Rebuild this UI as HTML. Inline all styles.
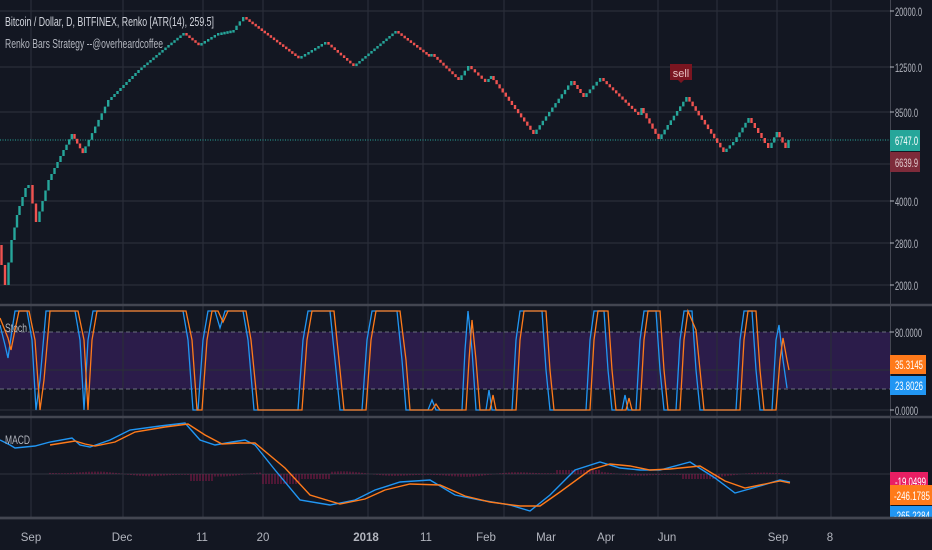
<!DOCTYPE html>
<html><head><meta charset="utf-8"><style>
html,body{margin:0;padding:0;background:#131722;}
body{width:932px;height:550px;overflow:hidden;position:relative;font-family:"Liberation Sans",sans-serif;}
svg{position:absolute;left:0;top:0}
text{font-family:"Liberation Sans",sans-serif;}
</style></head><body>
<svg id="s" width="932" height="550" viewBox="0 0 932 550">
<rect width="932" height="550" fill="#131722"/>
<rect x="0" y="332" width="890" height="57" fill="#2b1c4a"/>
<g stroke="#2a2e39" stroke-width="1.2" fill="none">
<path d="M0 11H890M0 67H890M0 112H890M0 164H890M0 201H890M0 243H890M0 285H890"/>
<path d="M0 370H890M0 410H890M0 474H890"/>
<path d="M31 0V518M123 0V518M203 0V518M263 0V518M368 0V518M423 0V518M504 0V518M592 0V518M658 0V518M717 0V518M777 0V518M831 0V518"/>
</g>
<g stroke="#6b6f7d" stroke-width="1" stroke-dasharray="4 3">
<path d="M0 332H890M0 389H890"/>
</g>
<g stroke="#434651" stroke-width="2.5">
<path d="M0 305H932M0 417H932M0 518H932"/>
</g>
<path d="M890.5 0V518" stroke="#434651" stroke-width="1"/>
<path d="M0 140H890" stroke="#26a69a" stroke-width="1" stroke-dasharray="1 1.5"/>
<g id="renko"></g>
<polyline fill="none" stroke="#2196f3" stroke-width="1.3" points="0,325 5,345 8,358 12,330 15,311 27,311 32,340 36,410 40,380 46,311 75,311 80,340 84,410 88,340 93,311 183,311 188,340 193,410 198,410 203,340 208,311 215,311 220,328 225,311 243,311 248,340 254,410 298,410 303,340 308,311 330,311 336,370 340,410 362,410 367,340 372,311 397,311 402,360 406,410 428,410 432,400 436,410 462,410 465,350 468,311 472,350 476,410 486,410 489,390 492,410 512,410 516,340 520,311 542,311 546,370 550,410 586,410 590,340 594,311 604,311 608,370 612,410 622,410 625,395 628,410 636,410 640,340 644,311 656,311 660,370 664,410 676,410 680,340 684,311 692,311 696,370 700,410 736,410 740,340 744,311 752,311 756,370 760,410 772,410 776,340 779,325 783,360 787,388"/>
<polyline fill="none" stroke="#ff7a1a" stroke-width="1.3" points="0,318 8,338 11,350 15,330 19,311 29,311 35,340 40,410 44,380 50,311 78,311 84,340 88,410 92,340 97,311 186,311 192,340 197,410 202,410 207,340 212,311 218,311 223,322 228,311 246,311 251,340 258,410 302,410 307,340 312,311 334,311 340,370 344,410 366,410 371,340 376,311 400,311 406,360 410,410 432,410 436,404 440,410 466,410 469,360 472,320 476,360 480,410 490,410 493,395 496,410 516,410 520,340 524,311 546,311 550,370 554,410 590,410 594,340 598,311 608,311 612,370 616,410 626,410 629,398 632,410 640,410 644,340 648,311 660,311 664,370 668,410 680,410 684,340 688,311 696,330 700,370 704,410 740,410 744,340 748,311 756,311 760,370 764,410 776,410 780,360 783,338 787,360 789,370"/>
<g id="hist" stroke="#c2185b" stroke-width="0.8" opacity="0.85"></g>
<polyline fill="none" stroke="#2196f3" stroke-width="1.4" points="0,440 10,445 15,448 35,446 50,442 72,438 80,445 90,447 110,440 130,430 160,426 185,423 200,440 215,445 232,442 245,440 255,445 275,470 300,500 330,505 355,500 375,490 400,482 430,480 455,495 480,500 510,505 530,511 550,495 575,470 600,462 620,468 640,470 660,470 690,462 715,478 735,493 760,486 780,480 790,482"/>
<polyline fill="none" stroke="#ff7a1a" stroke-width="1.4" points="50,445 75,441 85,444 95,446 115,442 135,432 165,427 188,424 205,435 222,444 240,443 255,443 285,468 310,495 340,504 365,499 385,490 410,484 440,485 465,496 490,502 520,506 540,506 560,492 590,470 610,464 630,466 650,470 670,469 700,466 725,481 745,488 765,484 780,481 790,483"/>
<path d="M670 64h22v16h-8l-3 3-3-3h-8z" fill="#7a1520"/>
<text x="681" y="77" fill="#e8c0c0" font-size="11" text-anchor="middle">sell</text>
<text x="5" y="26" fill="#d1d4dc" font-size="12.5" textLength="209" lengthAdjust="spacingAndGlyphs">Bitcoin / Dollar, D, BITFINEX, Renko [ATR(14), 259.5]</text>
<text x="5" y="48" fill="#b2b5be" font-size="12.5" textLength="158" lengthAdjust="spacingAndGlyphs">Renko Bars Strategy --@overheardcoffee</text>
<text x="5" y="332" fill="#b2b5be" font-size="12" textLength="22" lengthAdjust="spacingAndGlyphs">Stoch</text>
<text x="5" y="444" fill="#b2b5be" font-size="12" textLength="25" lengthAdjust="spacingAndGlyphs">MACD</text>
<g fill="#b2b5be" font-size="12">
<path d="M890 11h4M890 67h4M890 112h4M890 201h4M890 243h4M890 285h4M890 332h4M890 410h4" stroke="#b2b5be"/>
<text x="895" y="16" textLength="27" lengthAdjust="spacingAndGlyphs">20000.0</text>
<text x="895" y="72" textLength="27" lengthAdjust="spacingAndGlyphs">12500.0</text>
<text x="895" y="117" textLength="23" lengthAdjust="spacingAndGlyphs">8500.0</text>
<text x="895" y="206" textLength="23" lengthAdjust="spacingAndGlyphs">4000.0</text>
<text x="895" y="248" textLength="23" lengthAdjust="spacingAndGlyphs">2800.0</text>
<text x="895" y="290" textLength="23" lengthAdjust="spacingAndGlyphs">2000.0</text>
<text x="895" y="337" textLength="27" lengthAdjust="spacingAndGlyphs">80.0000</text>
<text x="895" y="415" textLength="23" lengthAdjust="spacingAndGlyphs">0.0000</text>
</g>
<rect x="890" y="130" width="30" height="21" fill="#26a69a"/>
<text x="895" y="145" fill="#fff" font-size="12" textLength="23" lengthAdjust="spacingAndGlyphs">6747.0</text>
<rect x="890" y="152" width="30" height="20" fill="#7d2b3a"/>
<text x="895" y="167" fill="#e0c8cc" font-size="12" textLength="23" lengthAdjust="spacingAndGlyphs">6639.9</text>
<rect x="890" y="355" width="36" height="19" fill="#ff7a1a"/>
<text x="895" y="369" fill="#fff" font-size="12" textLength="28" lengthAdjust="spacingAndGlyphs">35.3145</text>
<rect x="890" y="376" width="36" height="19" fill="#2196f3"/>
<text x="895" y="390" fill="#fff" font-size="12" textLength="28" lengthAdjust="spacingAndGlyphs">23.8026</text>
<rect x="890" y="472" width="38" height="19" fill="#e91e63"/>
<text x="895" y="486" fill="#fff" font-size="12" textLength="31" lengthAdjust="spacingAndGlyphs">-19.0499</text>
<rect x="890" y="485" width="42" height="20" fill="#ff7a1a"/>
<text x="894" y="500" fill="#fff" font-size="12" textLength="36" lengthAdjust="spacingAndGlyphs">-246.1785</text>
<rect x="890" y="506" width="42" height="12" fill="#2196f3"/>
<text x="894" y="520" fill="#fff" font-size="12" textLength="36" lengthAdjust="spacingAndGlyphs">-265.2284</text>
<rect x="890" y="518" width="42" height="32" fill="#131722"/>
<path d="M0 518H932" stroke="#434651" stroke-width="2.5"/>
<g fill="#b2b5be" font-size="11.5" text-anchor="middle">
<text x="31" y="541">Sep</text>
<text x="122" y="541">Dec</text>
<text x="202" y="541">11</text>
<text x="263" y="541">20</text>
<text x="366" y="541" font-weight="bold">2018</text>
<text x="426" y="541">11</text>
<text x="486" y="541">Feb</text>
<text x="546" y="541">Mar</text>
<text x="606" y="541">Apr</text>
<text x="667" y="541">Jun</text>
<text x="778" y="541">Sep</text>
<text x="830" y="541">8</text>
</g>
</svg>
<script>
var pts=[[0,245],[7,285],[13,240],[18,215],[27,188],[31,185],[38,222],[50,180],[65,150],[73,134],[84,153],[110,100],[140,70],[170,45],[185,33],[200,45],[220,33],[235,30],[245,17],[300,58],[307,54],[327,42],[355,66],[397,31],[425,52],[430,56],[433,54],[460,80],[470,66],[487,82],[492,76],[535,134],[573,81],[585,97],[602,78],[640,115],[642,108],[660,139],[688,97],[725,152],[735,142],[750,118],[770,148],[778,132],[787,148],[790,140]];
var g=document.getElementById('renko'),h='';
for(var k=0;k<pts.length-1;k++){var a=pts[k],b=pts[k+1];var n=Math.max(1,Math.round((b[0]-a[0])/3.1));var dx=(b[0]-a[0])/n,dy=(b[1]-a[1])/n;var c=dy<0?'#26a69a':'#ef5350';
for(var i=0;i<n;i++){var x=a[0]+i*dx,y1=a[1]+i*dy,y2=y1+dy;var t=Math.min(y1,y2),hh=Math.max(2.6,Math.abs(dy));h+='<rect x="'+(x+0.3).toFixed(1)+'" y="'+t.toFixed(1)+'" width="2.4" height="'+hh.toFixed(1)+'" fill="'+c+'"/>';}}
g.innerHTML=h;
var hs='';for(var x=50;x<790;x+=3){var v=Math.sin(x/40)*2+Math.sin(x/13)*1.2;if(x>190&&x<215)v=-7;if(x>262&&x<300)v=-10;if(x>300&&x<330)v=-5;if(x>555&&x<600)v=4;if(x>680&&x<720)v=-5;hs+='M'+x+' 474V'+(474-v).toFixed(1);}
document.getElementById('hist').innerHTML='<path d="'+hs+'"/>';
</script>
</body></html>
